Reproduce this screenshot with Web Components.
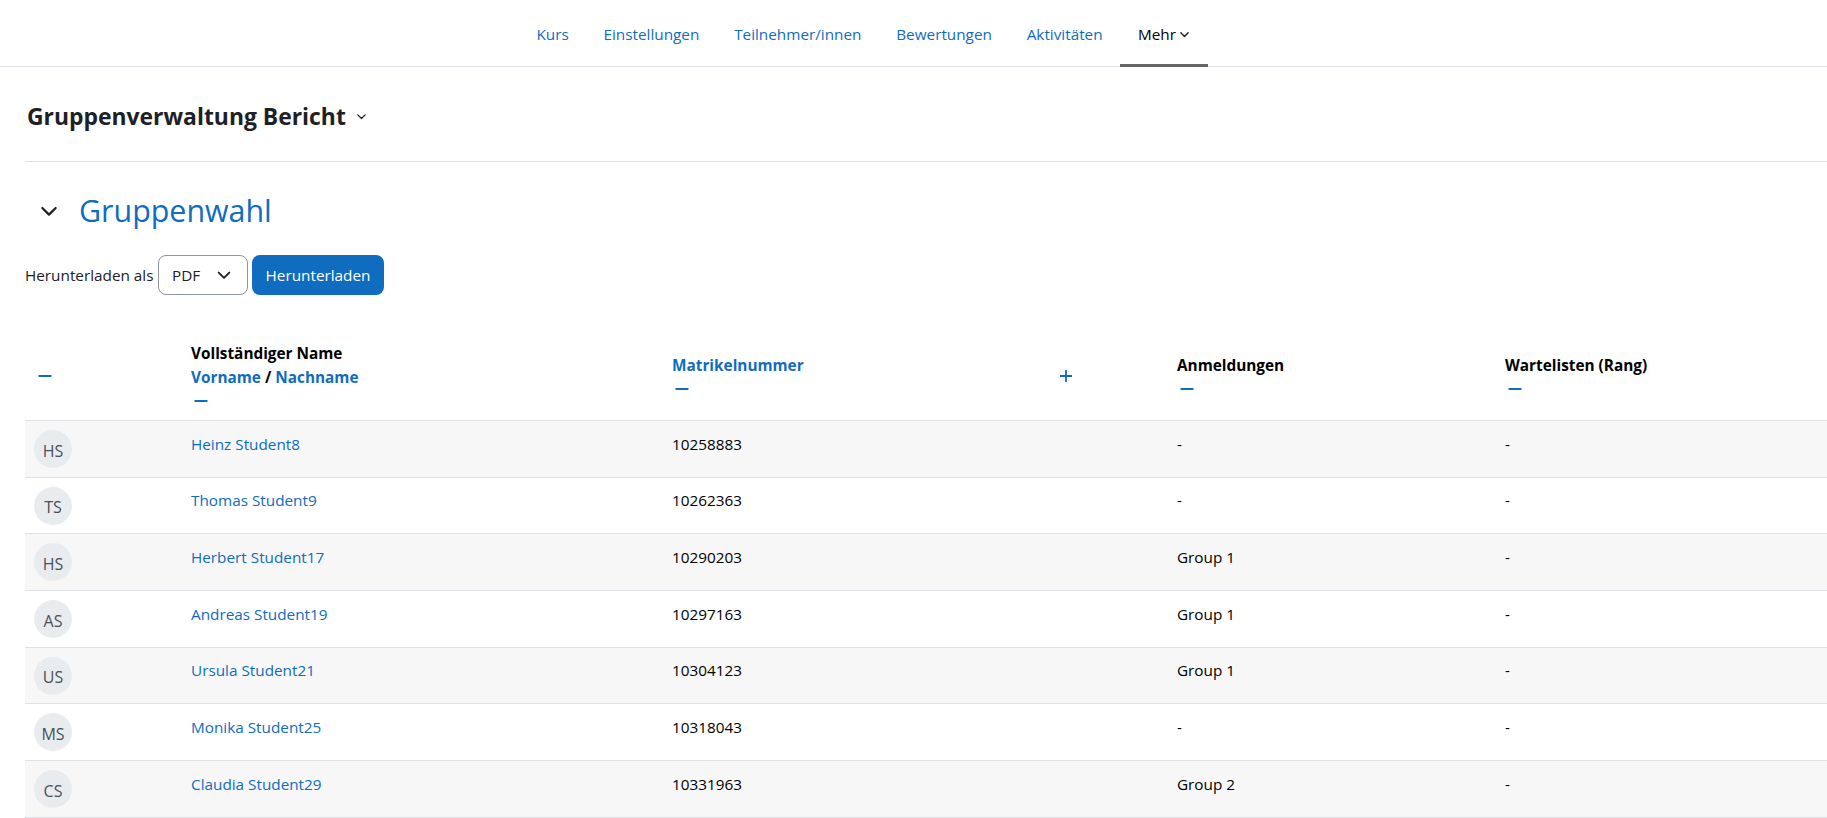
<!DOCTYPE html>
<html lang="de"><head><meta charset="utf-8"><title>Gruppenverwaltung Bericht</title>
<style>
html,body{margin:0;padding:0;background:#fff;overflow:hidden;height:818px}
body{font-family:"Open Sans","Noto Sans",sans-serif;font-size:15.3px;color:#000}
</style></head><body>
<top-nav>
  <nav-item>Kurs</nav-item><nav-item>Einstellungen</nav-item><nav-item>Teilnehmer/innen</nav-item><nav-item>Bewertungen</nav-item><nav-item>Aktivitäten</nav-item><nav-item active>Mehr</nav-item>
</top-nav>
<page-content>
  <report-title>Gruppenverwaltung Bericht</report-title>
  <section-head>Gruppenwahl</section-head>
  <download-bar label="Herunterladen als" format="PDF" action="Herunterladen"></download-bar>
  <report-table>
    <table-head></table-head>
    <user-row initials="HS" name="Heinz Student8" number="10258883" reg="-" wait="-"></user-row>
    <user-row initials="TS" name="Thomas Student9" number="10262363" reg="-" wait="-"></user-row>
    <user-row initials="HS" name="Herbert Student17" number="10290203" reg="Group 1" wait="-"></user-row>
    <user-row initials="AS" name="Andreas Student19" number="10297163" reg="Group 1" wait="-"></user-row>
    <user-row initials="US" name="Ursula Student21" number="10304123" reg="Group 1" wait="-"></user-row>
    <user-row initials="MS" name="Monika Student25" number="10318043" reg="-" wait="-"></user-row>
    <user-row initials="CS" name="Claudia Student29" number="10331963" reg="Group 2" wait="-"></user-row>
  </report-table>
</page-content>
<script>
const BLUE='#0f6cbf';
const chevron=(w,sw,col)=>`<svg width="${w}" height="${w}" viewBox="0 0 12 12" fill="none" stroke="${col}" stroke-width="${sw}" stroke-linecap="round" stroke-linejoin="round" aria-hidden="true"><path d="M2 4.2 6 8.2 10 4.2"/></svg>`;
const minus=`<svg width="14" height="14" viewBox="0 0 14 14" aria-hidden="true"><rect x="0.5" y="6" width="13" height="2" rx=".4" fill="${BLUE}"/></svg>`;
const plus=`<svg width="14" height="14" viewBox="0 0 14 14" aria-hidden="true"><path d="M1 6.1h5.1V1h1.8v5.1H13v1.8H7.9V13H6.1V7.9H1z" fill="${BLUE}"/></svg>`;
const COLS='grid-template-columns:157px 481px 388px 117px 328px 1fr;';
function def(name,html){
  customElements.define(name,class extends HTMLElement{
    constructor(){super();this.attachShadow({mode:'open'});}
    connectedCallback(){this.shadowRoot.innerHTML=typeof html==='function'?html(this):html;}
  });
}
def('top-nav',`<style>:host{display:flex;justify-content:center;height:66px;border-bottom:1px solid #dee2e6;padding-right:100px}</style><slot></slot>`);
def('nav-item',h=>{const a=h.hasAttribute('active');return `<style>:host{display:flex;align-items:center;gap:3px;height:67px;padding:4px ${a?'18px':'17.4px'} 0;box-sizing:border-box;color:${a?'#000':BLUE};border-bottom:3px solid ${a?'#666':'transparent'}}</style><slot></slot>${a?chevron(11,1.5,'#1d2125'):''}`});
def('page-content',`<style>:host{display:block;padding-left:25px}</style><slot></slot>`);
def('report-title',`<style>:host{display:flex;align-items:center;gap:10px;padding:4px 0 0 2px;box-sizing:border-box;height:95px;border-bottom:1px solid #dee2e6;font-size:22.9px;font-weight:700;color:#1d2125}</style><slot></slot>${chevron(11,1.4,'#1d2125')}`);
def('section-head',`<style>:host{display:flex;align-items:center;height:92px;padding-top:5px;box-sizing:border-box;font-size:30.4px;color:${BLUE}}.c{display:flex;width:54px;padding-left:14px;box-sizing:border-box}</style><span class="c">${chevron(20,1.35,'#1d2125')}</span><slot></slot>`);
def('download-bar',h=>`<style>:host{display:flex;align-items:center;height:40px;margin-top:1px}
.sel{display:flex;align-items:center;justify-content:space-between;width:90px;height:40px;box-sizing:border-box;margin-left:5px;padding:0 15px 0 13px;border:1px solid #8f959e;border-radius:8px;color:#1d2125}
.btn{display:flex;align-items:center;justify-content:center;width:132px;height:40px;margin-left:4px;background:${BLUE};color:#fff;border-radius:8px}</style>
<span style="color:#1d2125;width:128px;white-space:nowrap">${h.getAttribute('label')}</span><span class="sel">${h.getAttribute('format')}${chevron(16,1.4,'#1d2125')}</span><span class="btn">${h.getAttribute('action')}</span>`);
def('report-table',`<style>:host{display:block;margin-top:34px}</style><slot></slot>`);
def('table-head',`<style>:host{display:grid;${COLS}height:91px;border-bottom:1px solid #dee2e6;font-weight:700;font-size:15.35px}
.cell{padding:5px 0 0 9px;display:flex;flex-direction:column;justify-content:center;line-height:24px}
.one{padding-top:3px}
.i{display:flex;height:24px;align-items:center}
a{color:${BLUE};text-decoration:none}</style>
<div class="cell one" style="padding-left:13px"><span class="i">${minus}</span></div>
<div class="cell"><span>Vollständiger Name</span><span><a>Vorname</a> / <a>Nachname</a></span><span class="i" style="padding-left:3px">${minus}</span></div>
<div class="cell"><a>Matrikelnummer</a><span class="i" style="padding-left:3px">${minus}</span></div>
<div class="cell one" style="padding-left:8px"><span class="i">${plus}</span></div>
<div class="cell"><span>Anmeldungen</span><span class="i" style="padding-left:3px">${minus}</span></div>
<div class="cell"><span>Wartelisten (Rang)</span><span class="i" style="padding-left:3px">${minus}</span></div>`);
def('user-row',h=>`<style>:host{display:grid;${COLS}height:55.7px;border-bottom:1px solid #dee2e6}
:host(:nth-of-type(odd)){background:#f7f7f7}
.cell{padding:10.5px 0 0 9px;line-height:24px}
.av{width:38px;height:38px;border-radius:50%;background:#e9ecef;color:#495057;display:flex;align-items:center;justify-content:center;font-size:16px;margin:9px 0 0 9px;padding-top:3px;box-sizing:border-box}
a{color:${BLUE}}</style>
<div><div class="av">${h.getAttribute('initials')}</div></div>
<div class="cell"><a>${h.getAttribute('name')}</a></div>
<div class="cell">${h.getAttribute('number')}</div><div></div>
<div class="cell">${h.getAttribute('reg')}</div>
<div class="cell">${h.getAttribute('wait')}</div>`);
</script>
</body></html>
